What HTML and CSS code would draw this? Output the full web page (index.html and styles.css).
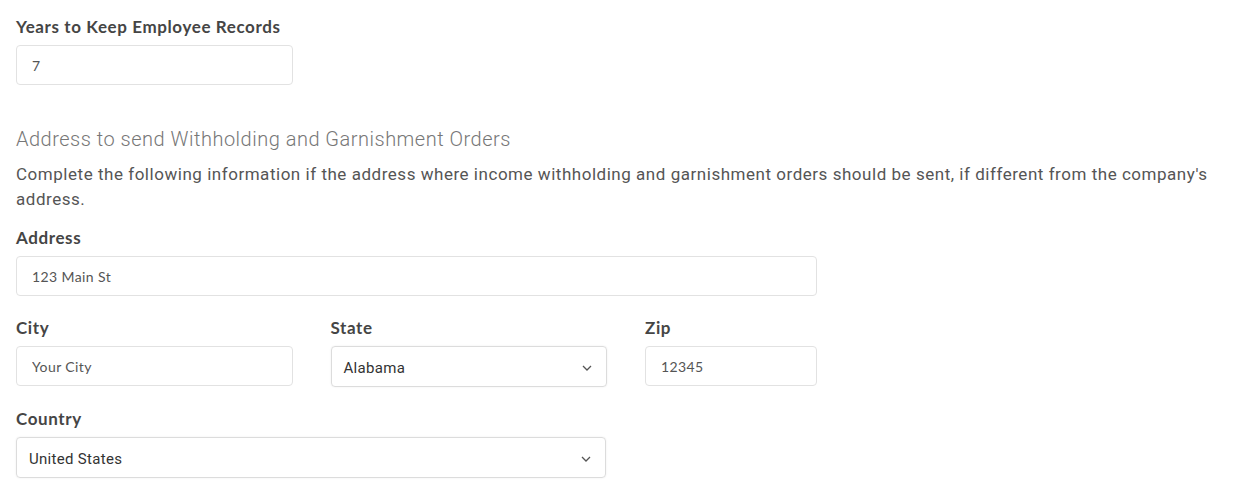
FILE: index.html
```html
<!DOCTYPE html>
<html lang="en">
<head>
  <meta charset="UTF-8" />
  <meta name="viewport" content="width=device-width, initial-scale=1.0" />
  <title>Company Settings</title>
  <link rel="stylesheet" href="styles.css">
</head>
<body>
<div class="form">
  <div class="field">
    <label for="years">Years to Keep Employee Records</label>
    <input id="years" class="input short" type="text" value="7" />
  </div>

  <h3 class="section-title">Address to send Withholding and Garnishment Orders</h3>
  <p class="section-text">Complete the following information if the address where income withholding and garnishment orders should be sent, if different from the company's address.</p>

  <div class="field">
    <label for="address">Address</label>
    <input id="address" class="input wide" type="text" value="123 Main St" />
  </div>

  <div class="row">
    <div class="field col">
      <label for="city">City</label>
      <input id="city" class="input short" type="text" value="Your City" />
    </div>
    <div class="field col">
      <label for="state">State</label>
      <div class="select state">
        <span>Alabama</span>
        <svg width="10" height="6" viewBox="0 0 10 6"><path d="M1 1l4 4 4-4" fill="none" stroke="#555" stroke-width="1.3"/></svg>
      </div>
    </div>
    <div class="field">
      <label for="zip">Zip</label>
      <input id="zip" class="input zip" type="text" value="12345" />
    </div>
  </div>

  <div class="field">
    <label>Country</label>
    <div class="select country">
      <span>United States</span>
      <svg width="10" height="6" viewBox="0 0 10 6"><path d="M1 1l4 4 4-4" fill="none" stroke="#555" stroke-width="1.3"/></svg>
    </div>
  </div>
</div>
</body>
</html>
```

FILE: styles.css
```css
body {
  margin: 0;
  padding: 0;
  background: #fff;
  font-family: Lato, sans-serif;
  color: #444;
}
.form {
  padding: 17px 16px 0 16px;
  max-width: 1213px;
}
.field {
  margin-bottom: 22px;
}
.field label {
  display: block;
  font-weight: 700;
  font-size: 17px;
  letter-spacing: 0.6px;
  line-height: 20px;
  margin-bottom: 8px;
  color: #454545;
}
.input {
  display: block;
  box-sizing: border-box;
  height: 40px;
  padding: 0 15px;
  border: 1px solid #e2e2e2;
  border-radius: 4px;
  font-family: Lato, sans-serif;
  font-size: 14px;
  letter-spacing: 0.4px;
  color: #555;
  background: #fff;
  outline: none;
}
.short {
  width: 277px;
}
.wide {
  width: 801px;
}
.zip {
  width: 172px;
}
.row {
  display: flex;
  width: 801px;
}
.col {
  width: 314.5px;
  margin-bottom: 22px;
}
.section-title {
  margin: 42px 0 11px;
  font-family: Roboto, sans-serif;
  font-weight: 300;
  font-size: 20px;
  letter-spacing: 0.5px;
  line-height: 24px;
  color: #777;
}
.section-text {
  margin: 0 0 16px;
  font-family: Roboto, sans-serif;
  font-size: 17px;
  letter-spacing: 0.53px;
  line-height: 25px;
  color: #555;
}
.select {
  box-sizing: border-box;
  height: 41px;
  display: flex;
  align-items: center;
  justify-content: space-between;
  padding: 2px 14px 0 12px;
  border: 1px solid #dcdcdc;
  border-radius: 4px;
  box-shadow: 0 0 2px rgba(0,0,0,0.08);
  font-family: Roboto, sans-serif;
  font-size: 15px;
  letter-spacing: 0.3px;
  color: #333;
}
.state {
  width: 276px;
  padding-left: 12px;
}
.country {
  width: 590px;
}
```
